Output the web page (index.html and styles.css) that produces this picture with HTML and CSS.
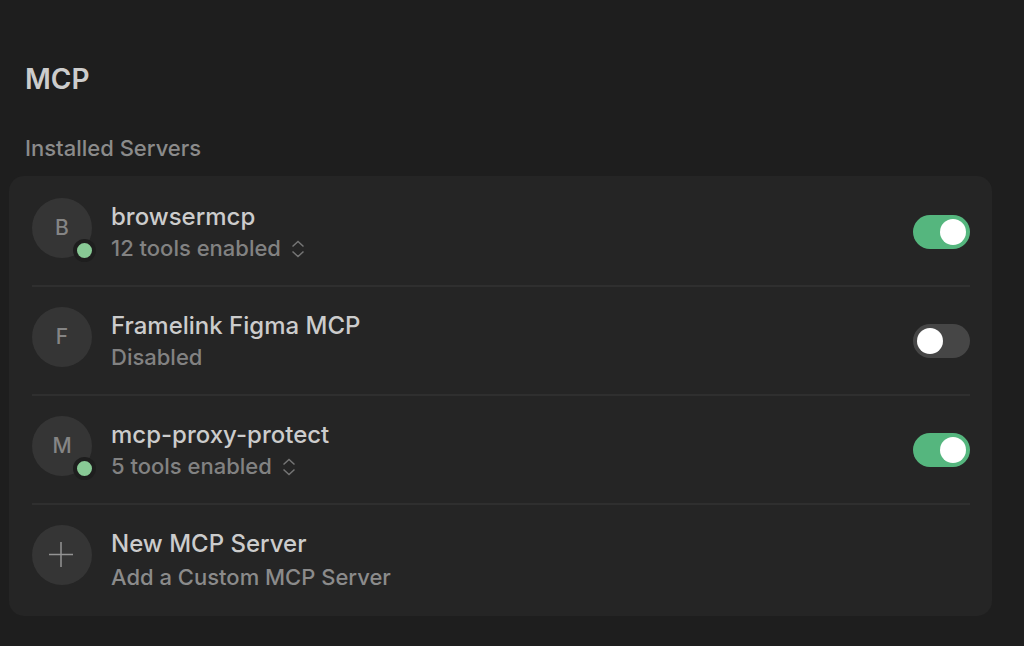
FILE: index.html
```html
<!DOCTYPE html>
<html lang="en">
<head>
	<meta charset="UTF-8">
	<title>MCP</title>
	<link rel="stylesheet" href="styles.css">
</head>
<body>

<main class="settings">
	<h1>MCP</h1>
	<h2>Installed Servers</h2>

	<ul class="servers">
		<li class="server">
			<div class="avatar">B<span class="status"></span></div>
			<div class="info">
				<label class="name" for="server1">browsermcp</label>
				<button class="tools" type="button">12 tools enabled
					<svg class="chevrons" width="12" height="18" viewBox="0 0 12 18"><path d="M.5 6.500 6 1.500l5.500 5M.5 11.500l5.500 5 5.500-5"/></svg>
				</button>
			</div>
			<input class="toggle" id="server1" type="checkbox" checked>
		</li>
		<li class="server">
			<div class="avatar">F</div>
			<div class="info">
				<label class="name" for="server2">Framelink Figma MCP</label>
				<span class="detail">Disabled</span>
			</div>
			<input class="toggle" id="server2" type="checkbox">
		</li>
		<li class="server">
			<div class="avatar">M<span class="status"></span></div>
			<div class="info">
				<label class="name" for="server3">mcp-proxy-protect</label>
				<button class="tools" type="button">5 tools enabled
					<svg class="chevrons" width="12" height="18" viewBox="0 0 12 18"><path d="M.5 6.500 6 1.500l5.500 5M.5 11.500l5.500 5 5.500-5"/></svg>
				</button>
			</div>
			<input class="toggle" id="server3" type="checkbox" checked>
		</li>
		<li>
			<button class="server add" type="button">
				<span class="avatar">
					<svg class="plus" width="26" height="26" viewBox="0 0 26 26"><path d="M12 0v25M0 12.500h24"/></svg>
				</span>
				<span class="info">
					<span class="name">New MCP Server</span>
					<span class="detail">Add a Custom MCP Server</span>
				</span>
			</button>
		</li>
	</ul>
</main>

</body>
</html>
```

FILE: styles.css
```css
body {
	margin: 0;
	background-color: #1e1e1e;
	color: #cccccc;
	font-family: Inter, "Liberation Sans", sans-serif;
}
h1, h2 {
	margin: 0 16px;
}
h1 {
	font-size: 28px;
	line-height: 36px;
	font-weight: 600;
}
h2 {
	margin-top: 37px;
	color: #8b8b8b;
	font-size: 22px;
	line-height: 28px;
	font-weight: 500;
}
button {
	padding: 0;
	border: none;
	background: none;
	font-family: inherit;
	text-align: left;
	cursor: pointer;
}
.settings {
	padding: 61px 32px 30px 9px;
}
.servers {
	margin: 14px 0 0;
	padding: 2px 22px 4px 23px;
	border-radius: 15px;
	background-color: #252525;
	list-style: none;
}
.server {
	display: flex;
	align-items: flex-start;
	gap: 19px;
	min-height: 68px;
	padding: 20px 0 19px;
	border-bottom: 2px solid #2f2f2f;
}
.add {
	width: 100%;
	border-bottom: none;
}
.avatar {
	position: relative;
	display: flex;
	align-items: center;
	justify-content: center;
	width: 60px;
	height: 60px;
	border-radius: 50%;
	background-color: #353535;
	color: #858585;
	font-size: 21px;
	line-height: 30px;
	font-weight: 500;
}
/* green dot over the avatar's corner */
.status {
	position: absolute;
	right: -4px;
	bottom: -4px;
	width: 15px;
	height: 15px;
	border: 4px solid #1e1e1e;
	border-radius: 50%;
	background-color: #88c995;
}
.info {
	display: flex;
	flex: 1;
	flex-direction: column;
	align-items: flex-start;
	padding-top: 2px;
}
.name {
	color: #cccccc;
	font-size: 24px;
	line-height: 33px;
	font-weight: 500;
}
.tools, .detail {
	color: #828282;
	font-size: 22px;
	line-height: 31px;
	font-weight: 500;
}
.tools {
	display: flex;
	align-items: center;
	gap: 11px;
}
.add .info {
	gap: 2px;
}
.add .detail {
	color: #8b8b8b;
}
.chevrons, .plus {
	fill: none;
	stroke: #757575;
	stroke-width: 1.5;
}
.plus {
	stroke: #949494;
}
.toggle {
	appearance: none;
	align-self: center;
	width: 57px;
	height: 34px;
	margin: 0;
	padding: 4px;
	box-sizing: border-box;
	border-radius: 17px;
	background-color: #464646;
	cursor: pointer;
}
.toggle::before {
	content: "";
	display: block;
	width: 26px;
	height: 26px;
	border-radius: 50%;
	background-color: #ffffff;
}
.toggle:checked {
	background-color: #55b67e;
}
.toggle:checked::before {
	margin-left: auto;
}
```
